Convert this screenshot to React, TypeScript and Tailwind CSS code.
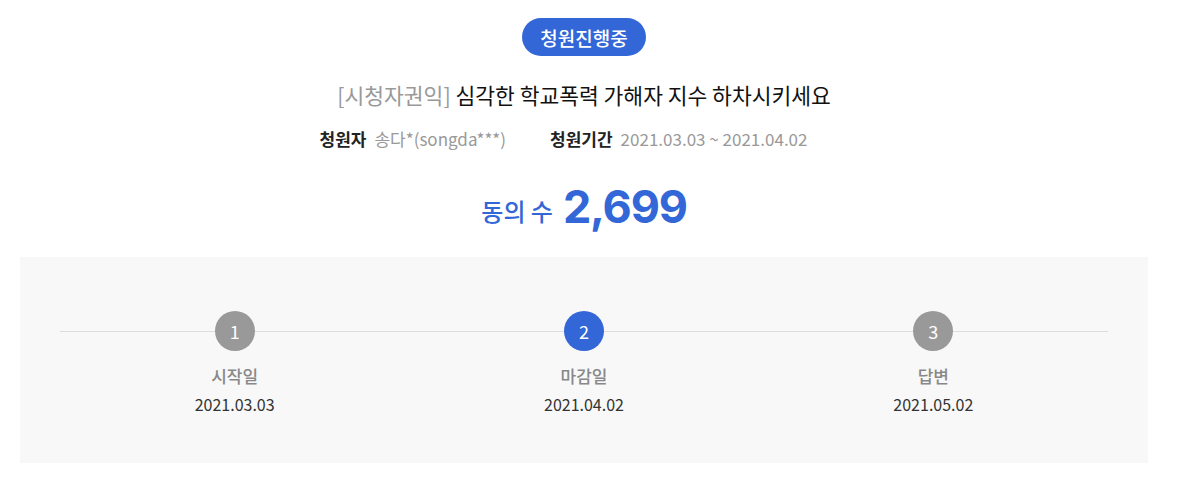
const STEPS = [
  { no: 1, label: '시작일', date: '2021.03.03', active: false },
  { no: 2, label: '마감일', date: '2021.04.02', active: true },
  { no: 3, label: '답변', date: '2021.05.02', active: false },
];

export default function App() {
  return (
    <div className="w-[1168px] h-[477px] bg-white font-['Noto_Sans_CJK_KR','Noto_Sans',sans-serif] flex flex-col items-center pt-[18px]">
      <div className="h-[38px] px-[18px] rounded-full bg-[#3366d6] text-white text-[19px] font-medium flex items-center leading-none">
        청원진행중
      </div>

      <h2 className="mt-[24px] text-[21.5px] leading-[30px] text-[#111]">
        <span className="text-[#999]">[시청자권익]</span> 심각한 학교폭력 가해자 지수 하차시키세요
      </h2>

      <div className="mt-[17px] pr-[41px] flex items-center text-[17px] leading-[24px]">
        <span className="font-bold text-[#222]">청원자</span>
        <span className="ml-[8px] text-[#999]">송다*(songda***)</span>
        <span className="ml-[44px] font-bold text-[#222]">청원기간</span>
        <span className="ml-[8px] text-[#999]">2021.03.03 ~ 2021.04.02</span>
      </div>

      <div className="mt-[26px] flex items-center text-[#3366d6]">
        <span className="text-[24px] font-medium mt-[8px]">동의 수</span>
        <span className="ml-[10px] text-[45px] leading-[60px] font-bold font-['Inter',sans-serif] tracking-[-1.2px]">2,699</span>
      </div>

      <div className="mt-[20px] w-[1128px] h-[206px] bg-[#f8f8f8] px-[40px] pt-[54px]">
        <div className="relative grid grid-cols-3">
          <div className="absolute left-0 right-0 top-[20px] h-px bg-[#dddddd]" />
          {STEPS.map((s) => (
            <div key={s.no} className="relative flex flex-col items-center">
              <div
                className={`w-[40px] h-[40px] rounded-full flex items-center justify-center text-white text-[18px] ${
                  s.active ? 'bg-[#3366d6]' : 'bg-[#999999]'
                }`}
              >
                {s.no}
              </div>
              <div className="mt-[13px] text-[17px] leading-[24px] text-[#888] font-medium">{s.label}</div>
              <div className="mt-[4px] text-[16px] leading-[24px] text-[#333]">{s.date}</div>
            </div>
          ))}
        </div>
      </div>
    </div>
  );
}
